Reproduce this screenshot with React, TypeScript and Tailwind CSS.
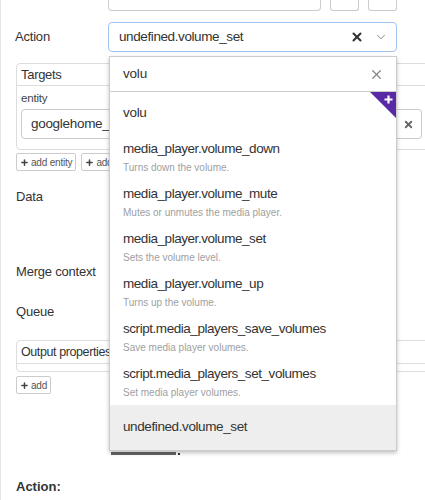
import { X, ChevronDown, Plus } from 'lucide-react';

const items = [
  { name: 'media_player.volume_down', desc: 'Turns down the volume.' },
  { name: 'media_player.volume_mute', desc: 'Mutes or unmutes the media player.' },
  { name: 'media_player.volume_set', desc: 'Sets the volume level.' },
  { name: 'media_player.volume_up', desc: 'Turns up the volume.' },
  { name: 'script.media_players_save_volumes', desc: 'Save media player volumes.' },
  { name: 'script.media_players_set_volumes', desc: 'Set media player volumes.' },
];

function SmallButton({ label }: { label: string }) {
  return (
    <div className="flex items-center gap-[2px] h-[18px] px-[3px] border border-[#ccc] rounded-[2px] text-[10px] tracking-[-0.2px] text-[#555] bg-white">
      <Plus size={9} strokeWidth={4} className="text-[#444]" />
      {label}
    </div>
  );
}

export default function App() {
  return (
    <div
      className="relative w-[425px] h-[500px] overflow-hidden bg-white text-[#333] border-l border-[#e5e5e5]"
      style={{ fontFamily: '"Liberation Sans", Arial, sans-serif' }}
    >
      {/* top row, cut off */}
      <div className="flex pl-[107px] h-[11px]">
        <div className="w-[213px] h-[11px] border border-t-0 border-[#ccc] rounded-b-[4px]" />
        <div className="w-[29px] h-[11px] ml-[9px] border border-t-0 border-[#ccc] rounded-b-[3px]" />
        <div className="w-[29px] h-[11px] ml-[9px] border border-t-0 border-[#ccc] rounded-b-[3px]" />
      </div>

      {/* Action row */}
      <div className="flex items-center mt-[11px] h-[30px]">
        <div className="w-[107px] pl-[14px] text-[13px] tracking-[-0.2px]">Action</div>
        <div className="flex items-center w-[289px] h-[30px] border border-[#9ec3ee] rounded-[4px] pl-[10px] pr-[8px]">
          <span className="flex-1 text-[13.5px] tracking-[-0.4px] text-[#333]">undefined.volume_set</span>
          <X size={14} strokeWidth={3.5} className="text-[#333] mr-[10px]" />
          <ChevronDown size={14} strokeWidth={1.5} className="text-[#777]" />
        </div>
      </div>

      {/* Targets */}
      <div className="mt-[11px] ml-[15px] w-[430px] border border-[#ddd] rounded-[4px]">
        <div className="h-[22px] border-b border-[#ddd] pl-[4px] text-[13px] tracking-[-0.3px] leading-[22px]">Targets</div>
        <div className="px-[4px] pt-[5px] pb-[10px]">
          <div className="text-[11.5px] tracking-[-0.2px] text-[#444] leading-[14px]">entity</div>
          <div className="flex mt-[4px] h-[30px]">
            <div className="w-[375px] border border-[#ccc] rounded-l-[4px] pl-[9px] text-[13.5px] tracking-[-0.3px] leading-[28px]">
              googlehome_s
            </div>
            <div className="w-[26px] flex items-center justify-center border border-l-0 border-[#ccc] rounded-r-[4px]">
              <X size={11} strokeWidth={4} className="text-[#666]" />
            </div>
          </div>
        </div>
      </div>
      <div className="flex gap-[5px] mt-[3px] ml-[15px]">
        <SmallButton label="add entity" />
        <SmallButton label="add group" />
      </div>

      {/* Fields */}
      <div className="pl-[15px] text-[13px] tracking-[-0.2px]">
        <div className="mt-[18px] leading-[16px]">Data</div>
        <div className="mt-[59px] leading-[16px]">Merge context</div>
        <div className="mt-[24px] leading-[16px]">Queue</div>
      </div>

      {/* Output properties */}
      <div className="mt-[20px] ml-[15px] w-[430px] h-[32px] border border-[#ddd] rounded-[4px]">
        <div className="h-[23px] border-b border-[#ddd] pl-[4px] text-[12.5px] tracking-[-0.4px] leading-[22px]">Output properties</div>
      </div>
      <div className="mt-[4px] ml-[15px] flex">
        <SmallButton label="add" />
      </div>

      <div className="mt-[58px] ml-[110px] flex items-center gap-[2px]">
        <div className="w-[65px] h-[3px] bg-[#666]" />
        <div className="w-[2px] h-[2px] bg-[#333]" />
      </div>

      <div className="mt-[24px] ml-[15px] text-[13px] leading-[16px] font-bold">Action:</div>

      {/* Dropdown overlay */}
      <div className="absolute left-[108px] top-[56px] w-[288px] h-[395px] bg-white border border-[#ccc] shadow-[0_2px_4px_rgba(0,0,0,0.25)] overflow-hidden">
        <div className="flex items-center h-[35px] border-b border-[#ccc] pl-[13px] pr-[12px]">
          <span className="flex-1 text-[13.5px] tracking-[-0.2px]">volu</span>
          <X size={15} strokeWidth={2} className="text-[#888]" />
        </div>
        <div className="relative">
          <div className="absolute right-0 top-0 w-[26px] h-[26px]">
            <svg width="26" height="26" viewBox="0 0 26 26">
              <polygon points="0,0 26,0 26,26" fill="#5a2aa6" />
              <path d="M18.5 3.5v8M14.5 7.5h8" stroke="#fff" strokeWidth="2.2" />
            </svg>
          </div>
          <div className="pl-[13px] pt-[11px] pb-[12px] text-[13.5px] tracking-[-0.3px] leading-[20px]">volu</div>
          {items.map((it) => (
            <div key={it.name} className="pl-[13px] pt-[4px] pb-[5px]">
              <div className="text-[13.5px] tracking-[-0.45px] leading-[20px] text-[#333]">{it.name}</div>
              <div className="mt-[2px] text-[10px] leading-[14px] text-[#a0a0a0]">{it.desc}</div>
            </div>
          ))}
          <div className="pl-[13px] h-[45px] bg-[#eee] flex items-center text-[13.5px] tracking-[-0.4px]">undefined.volume_set</div>
        </div>
      </div>
    </div>
  );
}
